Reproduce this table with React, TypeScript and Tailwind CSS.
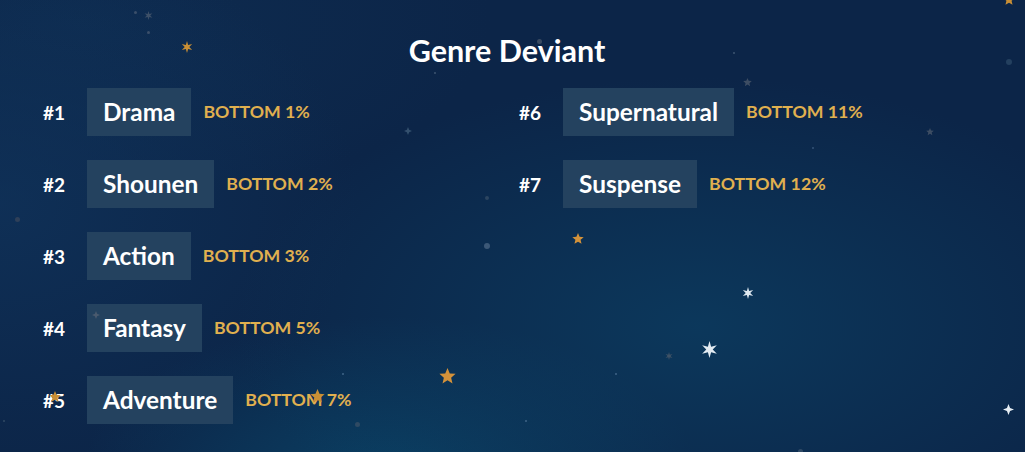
import React from "react";

type Star = { x: number; y: number; s: number; c: string; k: "star" | "dot" | "four" | "six" };

const stars: Star[] = [
  { x: 135, y: 12, s: 3, c: "#3b4f6a", k: "dot" },
  { x: 148, y: 15, s: 9, c: "#3d5068", k: "six" },
  { x: 148, y: 32, s: 3, c: "#3b4f6a", k: "dot" },
  { x: 187, y: 47, s: 12, c: "#c98f35", k: "six" },
  { x: 435, y: 73, s: 2, c: "#3d5470", k: "dot" },
  { x: 539, y: 41, s: 5, c: "#3a4b62", k: "dot" },
  { x: 408, y: 131, s: 8, c: "#34506e", k: "four" },
  { x: 734, y: 53, s: 2, c: "#3d5470", k: "dot" },
  { x: 747, y: 82, s: 9, c: "#3d4d63", k: "star" },
  { x: 1009, y: 62, s: 6, c: "#24405f", k: "dot" },
  { x: 930, y: 132, s: 8, c: "#3d4d63", k: "star" },
  { x: 813, y: 148, s: 2, c: "#355377", k: "dot" },
  { x: 1009, y: 0, s: 12, c: "#c98f35", k: "star" },
  { x: 17, y: 219, s: 5, c: "#2f4059", k: "dot" },
  { x: 487, y: 198, s: 4, c: "#2c4560", k: "dot" },
  { x: 487, y: 246, s: 6, c: "#3c5877", k: "dot" },
  { x: 578, y: 239, s: 12, c: "#d4923a", k: "star" },
  { x: 748, y: 293, s: 12, c: "#dfe8f0", k: "six" },
  { x: 709, y: 349, s: 17, c: "#e3ebf2", k: "six" },
  { x: 669, y: 356, s: 8, c: "#3f5266", k: "six" },
  { x: 447, y: 376, s: 17, c: "#d4923a", k: "star" },
  { x: 616, y: 374, s: 2, c: "#3f6587", k: "dot" },
  { x: 526, y: 421, s: 2, c: "#3f6587", k: "dot" },
  { x: 1008, y: 409, s: 11, c: "#e6edf3", k: "four" },
  { x: 800, y: 451, s: 5, c: "#2f4a66", k: "dot" },
  { x: 343, y: 374, s: 2, c: "#3f6587", k: "dot" },
  { x: 357, y: 424, s: 5, c: "#2f4a63", k: "dot" },
  { x: 4, y: 421, s: 2, c: "#2f4a63", k: "dot" },
  { x: 96, y: 315, s: 8, c: "#4a5a6e", k: "four" },
  { x: 55, y: 397, s: 12, c: "#c98f35", k: "star" },
  { x: 317, y: 396, s: 15, c: "#c98f35", k: "star" },
];

function starPath(k: Star["k"]): string {
  const pts: string[] = [];
  let n = 5;
  let inner = 0.45;
  if (k === "six") {
    n = 6;
    inner = 0.38;
  } else if (k === "four") {
    n = 4;
    inner = 0.4;
  }
  for (let i = 0; i < n * 2; i++) {
    const r = i % 2 === 0 ? 1 : inner;
    const a = (Math.PI * i) / n - Math.PI / 2;
    pts.push(`${(Math.cos(a) * r).toFixed(3)},${(Math.sin(a) * r).toFixed(3)}`);
  }
  return "M" + pts.join("L") + "Z";
}

function StarIcon({ st }: { st: Star }) {
  if (st.k === "dot") {
    return (
      <div
        className="absolute rounded-full"
        style={{ left: st.x - st.s / 2, top: st.y - st.s / 2, width: st.s, height: st.s, background: st.c }}
      />
    );
  }
  return (
    <svg
      className="absolute"
      style={{ left: st.x - st.s / 2, top: st.y - st.s / 2, width: st.s, height: st.s }}
      viewBox="-1 -1 2 2"
    >
      <path d={starPath(st.k)} fill={st.c} />
    </svg>
  );
}

const left = [
  { r: 1, g: "Drama", p: "BOTTOM 1%" },
  { r: 2, g: "Shounen", p: "BOTTOM 2%" },
  { r: 3, g: "Action", p: "BOTTOM 3%" },
  { r: 4, g: "Fantasy", p: "BOTTOM 5%" },
  { r: 5, g: "Adventure", p: "BOTTOM 7%" },
];
const right = [
  { r: 6, g: "Supernatural", p: "BOTTOM 11%" },
  { r: 7, g: "Suspense", p: "BOTTOM 12%" },
];

function Row({ r, g, p }: { r: number; g: string; p: string }) {
  return (
    <div className="flex h-12 items-center">
      <div className="w-[44px] shrink-0 text-[19px] font-bold leading-none text-white">#{r}</div>
      <div className="flex h-12 items-center bg-[#24425f] px-4 text-[24.4px] font-bold text-white">{g}</div>
      <div className="ml-3 text-[17.7px] font-bold text-[#e0b04f]">{p}</div>
    </div>
  );
}

export default function App() {
  return (
    <div
      className="relative h-[452px] w-[1025px] overflow-hidden bg-[#0c2548] bg-[radial-gradient(ellipse_45%_55%_at_68%_72%,rgba(12,62,98,0.75),transparent),radial-gradient(ellipse_30%_35%_at_38%_105%,rgba(10,70,105,0.8),transparent),radial-gradient(ellipse_35%_60%_at_0%_45%,rgba(16,52,92,0.7),transparent),radial-gradient(ellipse_40%_40%_at_8%_5%,rgba(15,48,85,0.6),transparent)]"
      style={{ fontFamily: "Lato, 'Noto Sans', sans-serif" }}
    >
      <div className="px-[43px] pt-[32px]">
        <h1 className="mb-5 mr-[11px] text-center text-[30.5px] font-bold leading-9 text-white">Genre Deviant</h1>
        <div className="grid grid-cols-2 gap-x-[13px]">
          <div className="flex flex-col gap-6">
            {left.map((x) => (
              <Row key={x.r} {...x} />
            ))}
          </div>
          <div className="flex flex-col gap-6">
            {right.map((x) => (
              <Row key={x.r} {...x} />
            ))}
          </div>
        </div>
      </div>
      <div className="pointer-events-none absolute inset-0">
        {stars.map((s, i) => (
          <StarIcon key={i} st={s} />
        ))}
      </div>
    </div>
  );
}
